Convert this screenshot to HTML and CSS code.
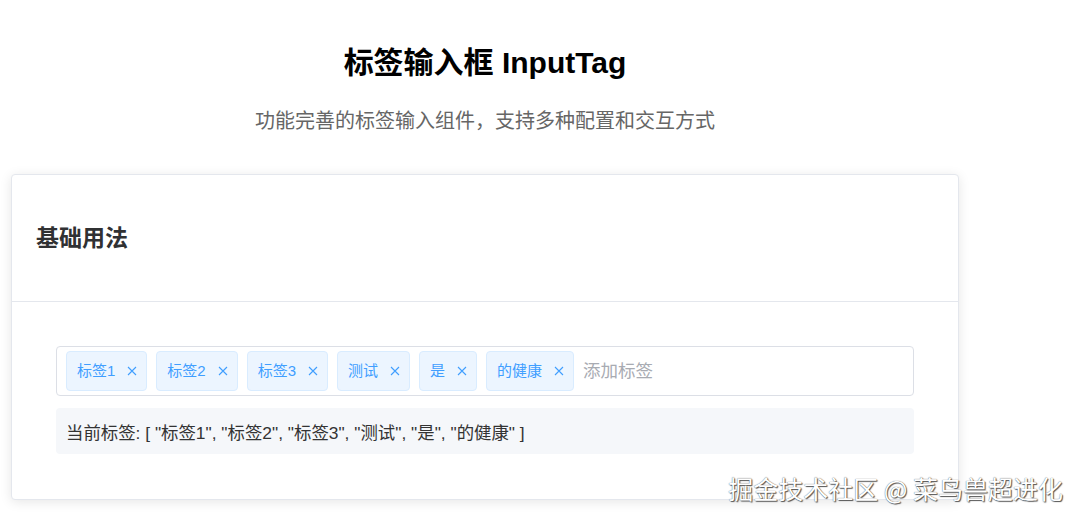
FILE: index.html
```html
<!DOCTYPE html>
<html lang="zh-CN">
<head>
<meta charset="utf-8">
<title>标签输入框 InputTag</title>
<link rel="stylesheet" href="styles.css">
</head>
<body>
<div class="page">
  <h1 class="title">标签输入框 InputTag</h1>
  <p class="subtitle">功能完善的标签输入组件，支持多种配置和交互方式</p>
  <div class="card">
    <div class="card-header"><h3 class="card-title">基础用法</h3></div>
    <div class="card-body">
      <div class="tag-input">
        <span class="tag"><span class="tag-text">标签1</span><svg class="tag-close" viewBox="0 0 10 10"><path d="M1 1L9 9M9 1L1 9"/></svg></span>
        <span class="tag"><span class="tag-text">标签2</span><svg class="tag-close" viewBox="0 0 10 10"><path d="M1 1L9 9M9 1L1 9"/></svg></span>
        <span class="tag"><span class="tag-text">标签3</span><svg class="tag-close" viewBox="0 0 10 10"><path d="M1 1L9 9M9 1L1 9"/></svg></span>
        <span class="tag"><span class="tag-text">测试</span><svg class="tag-close" viewBox="0 0 10 10"><path d="M1 1L9 9M9 1L1 9"/></svg></span>
        <span class="tag"><span class="tag-text">是</span><svg class="tag-close" viewBox="0 0 10 10"><path d="M1 1L9 9M9 1L1 9"/></svg></span>
        <span class="tag"><span class="tag-text">的健康</span><svg class="tag-close" viewBox="0 0 10 10"><path d="M1 1L9 9M9 1L1 9"/></svg></span>
        <input class="tag-field" type="text" placeholder="添加标签">
      </div>
      <div class="result">当前标签: [ "标签1", "标签2", "标签3", "测试", "是", "的健康" ]</div>
    </div>
  </div>
</div>
<div class="watermark">掘金技术社区 @ 菜鸟兽超进化</div>
</body>
</html>
```

FILE: styles.css
```css
* { box-sizing: border-box; }
html, body { margin: 0; padding: 0; background: #fff; }
body {
  font-family: "Liberation Sans", "Noto Sans CJK SC", sans-serif;
  color: #333;
  position: relative;
  height: 520px;
  overflow: hidden;
}
.page {
  width: 948px;
  margin-left: 11px;
  padding-top: 43px;
}
.title {
  margin: 0;
  text-align: center;
  font-size: 30px;
  line-height: 40px;
  font-weight: bold;
  color: #000;
}
.subtitle {
  margin: 23px 0 38px;
  text-align: center;
  font-size: 20px;
  line-height: 30px;
  color: #666;
}
.card {
  background: #fff;
  border: 1px solid #e4e7ed;
  border-radius: 4px;
  box-shadow: 0 2px 12px rgba(0, 0, 0, 0.1);
}
.card-header {
  padding: 50px 24px;
  border-bottom: 1px solid #e4e7ed;
}
.card-title {
  margin: 0;
  font-size: 23px;
  line-height: 26px;
  font-weight: bold;
  color: #303133;
}
.card-body {
  padding: 44px 44px 45px;
}
.tag-input {
  display: flex;
  align-items: center;
  gap: 9px;
  padding: 4px 9px;
  border: 1px solid #dcdfe6;
  border-radius: 4px;
  background: #fff;
}
.tag {
  display: inline-flex;
  align-items: center;
  height: 40px;
  padding: 0 9px 0 10px;
  background: #ecf5ff;
  border: 1px solid #d9ecff;
  border-radius: 4px;
  color: #409eff;
  font-size: 15px;
  white-space: nowrap;
}
.tag-text { line-height: 20px; }
.tag-close {
  width: 10px;
  height: 10px;
  margin-left: 12px;
  fill: none;
  stroke: #409eff;
  stroke-width: 1.1;
}
.tag-field {
  flex: 1;
  min-width: 0;
  border: none;
  outline: none;
  padding: 0;
  font-family: "Liberation Sans", "Noto Sans CJK SC", sans-serif;
  font-size: 17.5px;
  color: #333;
  background: transparent;
}
.tag-field::placeholder { color: #a8abb2; }
.result {
  margin-top: 12px;
  height: 46px;
  padding: 0 10px;
  display: flex;
  align-items: center;
  background: #f5f7fa;
  border-radius: 4px;
  font-size: 17.4px;
  color: #333;
}
.watermark {
  position: absolute;
  right: 16px;
  bottom: 18px;
  font-family: "Noto Sans CJK SC", sans-serif;
  font-size: 25px;
  line-height: 28px;
  color: #fff;
  text-shadow: 0 0 1px #444, 1px 1px 1px #555;
  white-space: nowrap;
}
```
